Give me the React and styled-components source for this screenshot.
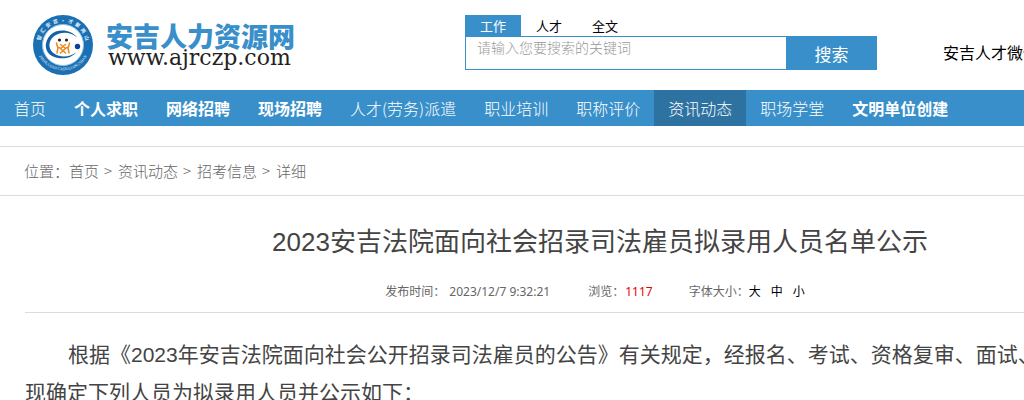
import React from "react";
import styled, { createGlobalStyle } from "styled-components";

const GlobalStyle = createGlobalStyle`
  html { scrollbar-width: none; }
  body {
    margin: 0;
    background: #fff;
    color: #444;
    font-family: "Noto Sans CJK SC", sans-serif;
    font-size: 16px;
    overflow-x: hidden;
  }
  a { color: inherit; text-decoration: none; }
`;

const Page = styled.div`
  min-width: 1200px;
`;

const Header = styled.header`
  display: flex;
  align-items: flex-start;
  height: 90px;
  padding-left: 32px;
`;

const Logo = styled.a`
  display: flex;
  gap: 12px;
  padding-top: 14px;
  width: 433px;
  box-sizing: border-box;
`;

const LogoName = styled.span`
  display: block;
  color: #398fc9;
  font-size: 27px;
  font-weight: 900;
  line-height: 28px;
  padding-top: 8px;
`;

const LogoUrl = styled.span`
  display: block;
  color: #222;
  font-family: "DejaVu Serif", serif;
  font-size: 22px;
  line-height: 16px;
  padding-left: 2px;
`;

const Search = styled.form`
  width: 412px;
  padding-top: 15px;
`;

const Tabs = styled.div`
  display: flex;
`;

const Tab = styled.button`
  border: 0;
  padding: 0 15px;
  height: 21px;
  font: 13px/20px "Noto Sans CJK SC", sans-serif;
  background: ${(p) => (p.$active ? "#398fc9" : "transparent")};
  color: ${(p) => (p.$active ? "#fff" : "#000")};
`;

const SearchRow = styled.div`
  display: flex;
  height: 34px;
`;

const SearchInput = styled.input`
  flex: 1;
  min-width: 0;
  box-sizing: border-box;
  border: 1px solid #398fc9;
  border-right: 0;
  padding: 0 12px 13px 11px;
  font: 14px/20px "Noto Sans CJK SC", sans-serif;
  outline: 0;
  &::placeholder { color: #999; font-weight: 300; }
`;

const SearchButton = styled.button`
  width: 91px;
  border: 0;
  background: #398fc9;
  color: #fff;
  font: 17px/34px "Noto Sans CJK SC", sans-serif;
`;

const WechatLink = styled.a`
  margin-left: 66px;
  padding-top: 40px;
  color: #000;
  line-height: 24px;
  white-space: nowrap;
`;

const Nav = styled.nav`
  display: flex;
  height: 36px;
  background: #398fc9;
  color: #fff;
`;

const NavLink = styled.a`
  padding: 0 14px;
  line-height: 36px;
  font-weight: ${(p) => (p.$strong ? 700 : 300)};
  background: ${(p) => (p.$active ? "#2e72a1" : "transparent")};
`;

const Breadcrumb = styled.nav`
  display: flex;
  gap: 5px;
  margin-top: 20px;
  padding: 0 24px;
  border: solid #dcdcdc;
  border-width: 1px 0;
  color: #666;
  font-size: 15px;
  font-weight: 300;
  line-height: 48px;
`;

const Separator = styled.span`
  min-width: 9px;
`;

const Article = styled.article`
  padding: 0 25px;
  font-family: "Liberation Sans", "Noto Sans CJK SC", sans-serif;
`;

const Title = styled.h1`
  margin: 0;
  padding-top: 26px;
  font-size: 26px;
  font-weight: 400;
  line-height: 40px;
  text-align: center;
`;

const Meta = styled.div`
  display: flex;
  justify-content: center;
  gap: 36px;
  padding: 20px 10px 10px 0;
  border-bottom: 1px solid #dcdcdc;
  color: #666;
  font-family: "Noto Sans", "Noto Sans CJK SC", sans-serif;
  font-size: 12px;
  line-height: 20px;
`;

const MetaItem = styled.span`
  display: flex;
`;

const PublishTime = styled.time`
  padding: 0 2px 0 4px;
`;

const Views = styled.span`
  padding-left: 1px;
  color: #e00;
`;

const Sizes = styled.span`
  display: flex;
  gap: 10px;
  color: #000;
`;

const Body = styled.p`
  margin: 0;
  padding-top: 23px;
  font-size: 21px;
  line-height: 38px;
  text-indent: 43px;
`;

const NAV = [
  { label: "首页" },
  { label: "个人求职", strong: true },
  { label: "网络招聘", strong: true },
  { label: "现场招聘", strong: true },
  { label: "人才(劳务)派遣" },
  { label: "职业培训" },
  { label: "职称评价" },
  { label: "资讯动态", active: true },
  { label: "职场学堂" },
  { label: "文明单位创建", strong: true },
];

const CRUMBS = ["资讯动态", "招考信息"];

function Seal() {
  return (
    <svg width="62" height="62" viewBox="0 0 62 62" aria-hidden="true">
      <defs>
        <path id="sealTop" d="M9.8 40 A23 23 0 1 1 52.2 40" />
        <path id="sealBottom" d="M4.6 35 A27 27 0 0 0 57.4 35" />
      </defs>
      <circle cx="31" cy="31" r="30" fill="#1b6fb3" />
      <circle cx="31" cy="31" r="20.5" fill="#fff" stroke="#8fc3e6" strokeWidth="1" />
      <g fill="#e4f2fb" fontFamily="Noto Sans CJK SC, sans-serif">
        <text fontSize="5" fontWeight="700">
          <textPath href="#sealTop" startOffset="50%" textAnchor="middle">智&#160; 汇&#160; 安&#160; 吉&#160; ·&#160; 才&#160; 聚&#160; 两&#160; 山</textPath>
        </text>
        <text fontSize="4" fontFamily="Liberation Serif, serif">
          <textPath href="#sealBottom" startOffset="50%" textAnchor="middle">ZHIHUIANJI CAIJULIANGSHAN</textPath>
        </text>
      </g>
      <path d="M45 23.5 C39 15 25 14.5 18.5 21 C11.5 28 12.5 38 20 42 C28 46 39 45 44 38.5 C37 43.5 28 43.5 22 39.5 C16 35 16 27.5 21.5 22.5 C28 17 39 17.5 45 23.5 Z" fill="#1460a8" />
      <circle cx="45.5" cy="32.5" r="2.7" fill="#123f8c" />
      <circle cx="27.5" cy="26" r="1.6" fill="#222" />
      <circle cx="34.5" cy="26" r="1.6" fill="#222" />
      <path d="M24.5 29 L25.5 33 L28 34 L33.5 39 M37.5 29 L36.5 33 L34 34 L28.5 39 M28.5 30.5 L33.5 34.5 M33.5 30.5 L28.5 34.5 M26 33.5 L25 39 M36 33.5 L37 39" fill="none" stroke="#ee8a1d" strokeWidth="1.5" strokeLinecap="round" strokeLinejoin="round" />
    </svg>
  );
}

export default function App() {
  return (
    <>
      <GlobalStyle />
      <Page>
        <Header>
          <Logo href="#">
            <Seal />
            <span>
              <LogoName>安吉人力资源网</LogoName>
              <LogoUrl>www.ajrczp.com</LogoUrl>
            </span>
          </Logo>
          <Search onSubmit={(e) => e.preventDefault()}>
            <Tabs>
              <Tab type="button" $active>工作</Tab>
              <Tab type="button">人才</Tab>
              <Tab type="button">全文</Tab>
            </Tabs>
            <SearchRow>
              <SearchInput type="text" aria-label="搜索关键词" placeholder="请输入您要搜索的关键词" />
              <SearchButton type="submit">搜索</SearchButton>
            </SearchRow>
          </Search>
          <WechatLink href="#">安吉人才微信</WechatLink>
        </Header>
        <Nav>
          {NAV.map((n) => (
            <NavLink key={n.label} href="#" $strong={n.strong} $active={n.active}>
              {n.label}
            </NavLink>
          ))}
        </Nav>
        <Breadcrumb>
          <span>位置：<a href="#">首页</a></span>
          {CRUMBS.map((c) => (
            <React.Fragment key={c}>
              <Separator>&gt;</Separator>
              <a href="#">{c}</a>
            </React.Fragment>
          ))}
          <Separator>&gt;</Separator>
          <span>详细</span>
        </Breadcrumb>
        <Article>
          <Title>2023安吉法院面向社会招录司法雇员拟录用人员名单公示</Title>
          <Meta>
            <MetaItem>发布时间：<PublishTime>2023/12/7 9:32:21</PublishTime></MetaItem>
            <MetaItem>浏览：<Views>1117</Views></MetaItem>
            <MetaItem>
              字体大小：
              <Sizes>
                <a href="#">大</a>
                <a href="#">中</a>
                <a href="#">小</a>
              </Sizes>
            </MetaItem>
          </Meta>
          <Body>
            根据《2023年安吉法院面向社会公开招录司法雇员的公告》有关规定，经报名、考试、资格复审、面试、
            <br />
            现确定下列人员为拟录用人员并公示如下：
          </Body>
        </Article>
      </Page>
    </>
  );
}
